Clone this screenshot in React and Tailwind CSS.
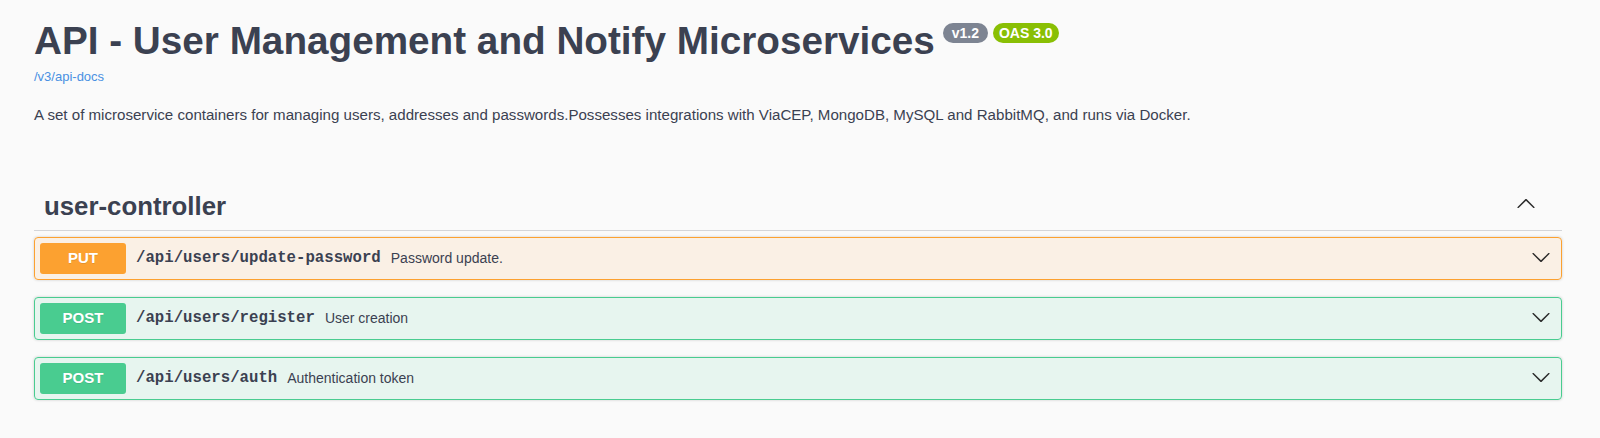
import React from "react";

function Arrow({ up = false, className = "" }) {
  return (
    <svg
      width="20"
      height="20"
      viewBox="0 0 20 20"
      className={`${up ? "rotate-180" : ""} ${className}`}
      aria-hidden="true"
    >
      <path
        fill="#2b2b2b"
        d="M17.418 6.109c.272-.268.709-.268.979 0s.271.701 0 .969l-7.908 7.83c-.27.268-.707.268-.979 0l-7.908-7.83c-.27-.268-.27-.701 0-.969.271-.268.709-.268.979 0L10 13.25l7.418-7.141z"
      />
    </svg>
  );
}

const ops = [
  {
    method: "PUT",
    path: "/api/users/update-password",
    desc: "Password update.",
    box: "border-[#fca130] bg-[rgba(252,161,48,0.1)]",
    badge: "bg-[#fca130]",
  },
  {
    method: "POST",
    path: "/api/users/register",
    desc: "User creation",
    box: "border-[#49cc90] bg-[rgba(73,204,144,0.1)]",
    badge: "bg-[#49cc90]",
  },
  {
    method: "POST",
    path: "/api/users/auth",
    desc: "Authentication token",
    box: "border-[#49cc90] bg-[rgba(73,204,144,0.1)]",
    badge: "bg-[#49cc90]",
  },
];

export default function App() {
  return (
    <div className="h-[438px] w-full overflow-hidden bg-[#fafafa] font-['Liberation_Sans',Arial,sans-serif] text-[#3b4151]">
      <div className="ml-[34px] w-[1528px]">
        {/* Title */}
        <div className="flex items-start pt-[19px]">
          <h2 className="text-[38.7px] font-bold leading-[44px] text-[#3b4151]">
            API - User Management and Notify Microservices
          </h2>
          <div className="ml-[8px] mt-[4px] flex gap-[5px]">
            <span className="flex h-[20px] w-[45px] items-center justify-center rounded-full bg-[#7d8492] text-[14px] font-bold leading-[20px] text-white">
              v1.2
            </span>
            <span className="flex h-[20px] w-[66px] items-center justify-center rounded-full bg-[#89bf04] text-[14px] font-bold leading-[20px] text-white">
              OAS 3.0
            </span>
          </div>
        </div>
        <a className="mt-[6px] block text-[13px] leading-[15px] text-[#4990e2]">
          /v3/api-docs
        </a>
        <p className="mt-[21px] text-[15.1px] leading-[20px] text-[#3b4151]">
          A set of microservice containers for managing users, addresses and passwords.Possesses integrations with ViaCEP, MongoDB, MySQL and RabbitMQ, and runs via Docker.
        </p>

        {/* Tag section */}
        <div className="mt-[59px] flex items-start justify-between border-b border-[rgba(59,65,81,0.2)] pb-[9px] pl-[10px] pr-[26px] pt-[7px]">
          <h3 className="text-[25.8px] font-bold leading-[30px] text-[#3b4151]">
            user-controller
          </h3>
          <Arrow up className="mt-[3px]" />
        </div>

        <div className="mt-[6px] flex flex-col gap-[17px]">
          {ops.map((op) => (
            <div
              key={op.path}
              className={`flex h-[43px] items-center rounded-[4px] border p-[5px] pr-[10px] shadow-[0_0_3px_rgba(0,0,0,0.19)] ${op.box}`}
            >
              <span
                className={`flex h-[31px] w-[86px] shrink-0 items-center justify-center rounded-[3px] text-[15px] font-bold text-white [text-shadow:0_1px_0_rgba(0,0,0,0.1)] ${op.badge}`}
              >
                {op.method}
              </span>
              <span className="px-[10px] font-['Liberation_Mono',monospace] text-[15.7px] font-bold text-[#3b4151]">
                {op.path}
              </span>
              <span className="text-[14px] text-[#3b4151]">{op.desc}</span>
              <div className="flex-1" />
              <Arrow className="mb-[4px]" />
            </div>
          ))}
        </div>
      </div>
    </div>
  );
}
